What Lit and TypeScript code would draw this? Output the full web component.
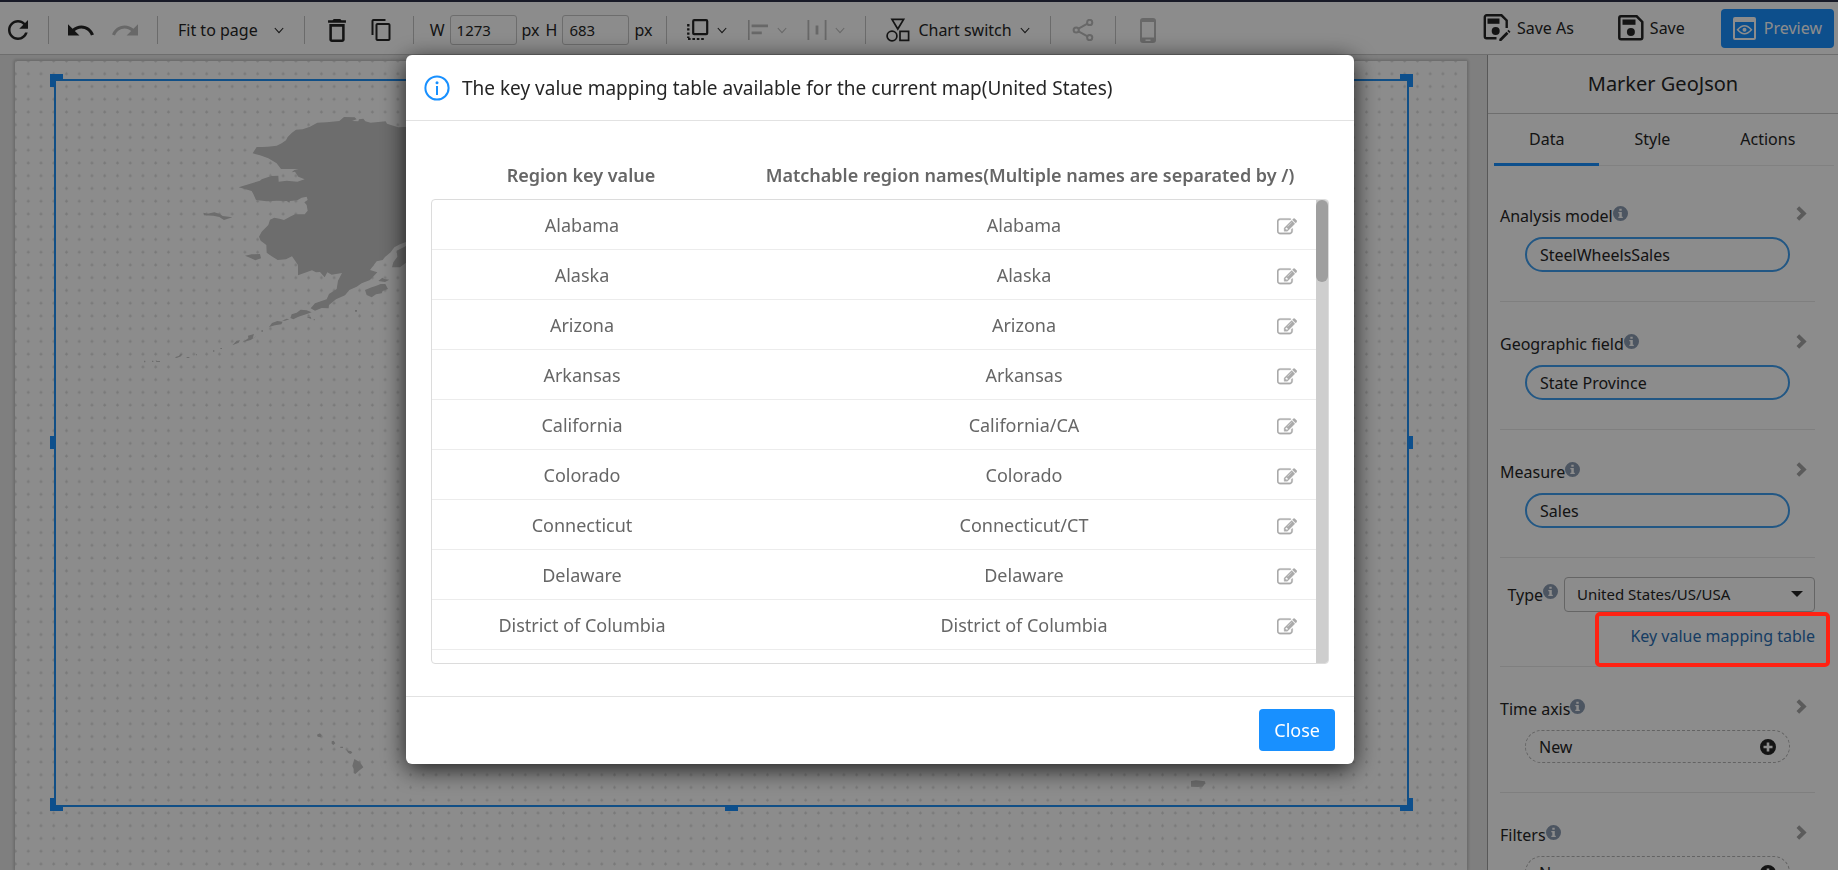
import { LitElement, html, svg, css, nothing, TemplateResult } from "lit";
import { customElement, property, state } from "lit/decorators.js";

type Glyph = { w: number; h: number; box: string; art: TemplateResult };

const GLYPHS: Record<string, Glyph> = {
  refresh: { w: 20, h: 20, box: "4 4 16 16", art: svg`<path d="M17.65 6.35C16.2 4.9 14.21 4 12 4c-4.42 0-7.99 3.58-7.99 8s3.57 8 7.99 8c3.73 0 6.84-2.55 7.73-6h-2.08c-.82 2.33-3.04 4-5.65 4-3.31 0-6-2.69-6-6s2.69-6 6-6c1.66 0 3.14.69 4.22 1.78L13 11h7V4l-2.35 2.35z"/>` },
  undo: { w: 26, h: 12, box: "2 7 20.5 9.2", art: svg`<path d="M12.5 8c-2.65 0-5.05.99-6.9 2.6L2 7v9h9l-3.62-3.62c1.39-1.16 3.16-1.88 5.12-1.88 3.54 0 6.55 2.31 7.6 5.5l2.37-.78C21.08 11.03 17.15 8 12.5 8z"/>` },
  redo: { w: 26, h: 12, box: "1.5 7 20.5 9.2", art: svg`<path d="M18.4 10.6C16.55 8.99 14.15 8 11.5 8c-4.65 0-8.58 3.03-9.96 7.22L3.9 16c1.05-3.19 4.05-5.5 7.6-5.5 1.95 0 3.73.72 5.12 1.88L13 16h9V7l-3.6 3.6z"/>` },
  trash: { w: 18, h: 23, box: "5 3 14 18", art: svg`<path d="M6 19c0 1.1.9 2 2 2h8c1.1 0 2-.9 2-2V7H6v12zM8 9h8v10H8V9zm7.5-5l-1-1h-5l-1 1H5v2h14V4z"/>` },
  copy: { w: 20, h: 22, box: "2 1 19 22", art: svg`<path d="M16 1H4c-1.1 0-2 .9-2 2v14h2V3h12V1zm3 4H8c-1.1 0-2 .9-2 2v14c0 1.1.9 2 2 2h11c1.1 0 2-.9 2-2V7c0-1.1-.9-2-2-2zm0 16H8V7h11v14z"/>` },
  caret: { w: 10, h: 7, box: "0 0 10 7", art: svg`<path d="M.8 1L5 5.6 9.2 1" fill="none" stroke="currentColor" stroke-width="1.1"/>` },
  layer: { w: 22, h: 22, box: "0 0 22 22", art: svg`<rect x="6.2" y="1.2" width="14" height="14" rx="1" fill="none" stroke="currentColor" stroke-width="2.2"/><path d="M1.3 5v14" stroke="currentColor" stroke-width="2.4" stroke-dasharray="2.4 1.8"/><path d="M1 20h17" stroke="currentColor" stroke-width="2.2" stroke-dasharray="2.6 1.8"/>` },
  align: { w: 22, h: 20, box: "0 0 22 20", art: svg`<path d="M1 0h1.6v20H1zM4.600 4.600h16.400v2.600H4.600zM4.600 11.600h10.200v2.600H4.600z"/>` },
  spread: { w: 20, h: 20, box: "0 0 20 20", art: svg`<path d="M.5 0h1.800v20H.5zM17.700 0h1.800v20h-1.800zM8.600 5.600h2.800v9H8.600z"/>` },
  shapes: { w: 24, h: 24, box: "0 0 24 24", art: svg`<g fill="none" stroke="currentColor" stroke-width="1.7"><path d="M6 1.400h11.600L11.800 11z"/><circle cx="6" cy="18" r="4.900"/><path d="M14 13.300h8.600v9H14z"/></g>` },
  share: { w: 22, h: 22, box: "0 0 22 22", art: svg`<g fill="none" stroke="currentColor" stroke-width="2"><circle cx="4.200" cy="11" r="2.600"/><circle cx="17.700" cy="3.400" r="2.600"/><circle cx="17.700" cy="18.600" r="2.600"/><path d="M6.500 9.700l9-5M6.500 12.300l9 5"/></g>` },
  phone: { w: 16, h: 25, box: "0 0 16 25", art: svg`<path fill-rule="evenodd" d="M3 0h10a3 3 0 0 1 3 3v19a3 3 0 0 1-3 3H3a3 3 0 0 1-3-3V3a3 3 0 0 1 3-3zM2 4v15.500h12V4zM5.500 21.500v1.400h5v-1.400z"/>` },
  saveAs: { w: 28, h: 28, box: "0 0 28 28", art: svg`<path d="M13.500 24.300H3.600a1.800 1.800 0 0 1-1.800-1.800V3.100a1.800 1.800 0 0 1 1.800-1.800h14.900l5.200 5.200v7.500" fill="none" stroke="currentColor" stroke-width="2.400"/><path d="M4.500 4.500h12v5.300h-12z"/><circle cx="12.700" cy="17" r="4"/><path d="M16.300 25l7.200-7.200 2 2-7.200 7.200h-2zM24.300 17l1.200-1.200 2 2-1.200 1.200z"/>` },
  save: { w: 26, h: 26, box: "0 0 26 26", art: svg`<path d="M3 1.300h15.700l5.600 5.600V22.500a1.800 1.800 0 0 1-1.800 1.800H3.100a1.800 1.800 0 0 1-1.800-1.800V3.100A1.800 1.800 0 0 1 3 1.300z" fill="none" stroke="currentColor" stroke-width="2.500"/><path d="M4.500 4.500h13v5.300h-13z"/><circle cx="12.900" cy="17" r="4"/>` },
  preview: { w: 23, h: 23, box: "0 0 23 23", art: svg`<path fill-rule="evenodd" d="M2 0h19a2 2 0 0 1 2 2v19a2 2 0 0 1-2 2H2a2 2 0 0 1-2-2V2a2 2 0 0 1 2-2zM2 5v16h19V5z"/><path d="M4.600 12.800Q11.500 4.800 18.400 12.800Q11.500 20.800 4.600 12.800z" fill="none" stroke="currentColor" stroke-width="1.600"/><circle cx="11.500" cy="12.800" r="2"/>` },
  note: { w: 15, h: 15, box: "0 0 15 15", art: svg`<path fill-rule="evenodd" d="M7.500 0a7.500 7.500 0 1 1 0 15a7.500 7.500 0 0 1 0-15zM6.300 2.700v2h2.400v-2zM5.300 5.900v1.300h1v3.500h-1V12h4.500v-1.300h-1V5.900z"/>` },
  chevron: { w: 11, h: 15, box: "0 0 11 15", art: svg`<path d="M3.200 .3L10.600 7.500 3.200 14.700.5 12 5 7.500.5 3z"/>` },
  plus: { w: 16, h: 16, box: "0 0 16 16", art: svg`<path fill-rule="evenodd" d="M8 0a8 8 0 1 1 0 16A8 8 0 0 1 8 0zM6.700 3.500v3.200H3.500v2.600h3.200v3.200h2.600V9.300h3.200V6.700H9.300V3.500z"/>` },
  info: { w: 26, h: 26, box: "0 0 26 26", art: svg`<circle cx="13" cy="13" r="11.600" fill="none" stroke="currentColor" stroke-width="2"/><circle cx="13" cy="7.800" r="1.500"/><path d="M12 11h2v9h-2z"/>` },
  edit: { w: 20, h: 20, box: "0 0 1792 1792", art: svg`<path stroke="currentColor" stroke-width="30" d="M888 1184l116-116-152-152-116 116v56h96v96h56zm440-720q-16-16-33 1l-350 350q-17 17-1 33t33-1l350-350q17-17 1-33zm80 594v190q0 119-84.500 203.500t-203.500 84.500h-832q-119 0-203.500-84.500t-84.500-203.500v-832q0-119 84.500-203.500t203.500-84.500h832q63 0 117 25 15 7 18 23 3 17-9 29l-49 49q-14 14-32 8-23-6-45-6h-832q-66 0-113 47t-47 113v832q0 66 47 113t113 47h832q66 0 113-47t47-113v-126q0-13 9-22l64-64q15-15 35-7t20 29zm-96-738l288 288-672 672h-288v-288zm444 132l-92 92-288-288 92-92q28-28 68-28t68 28l152 152q28 28 28 68t-28 68z"/>` },
};

const icon = (name: string) => {
  const g = GLYPHS[name];
  return html`<svg class="icon" width=${g.w} height=${g.h} viewBox=${g.box} fill="currentColor" aria-hidden="true">${g.art}</svg>`;
};

const shared = css`
  * { box-sizing: border-box; }
  button, input, select { font: inherit; color: inherit; margin: 0; }
  button { background: none; border: 0; padding: 0; cursor: pointer; }
  .icon { display: block; flex: none; }
`;

@customElement("tool-bar")
class ToolBar extends LitElement {
  static styles = [shared, css`
    :host { display: flex; justify-content: space-between; align-items: center; height: 53px; background: #fff; border-bottom: 1px solid #c8c8c8; color: #262626; }
    .tools, .group, .actions, .item { display: flex; align-items: center; }
    .tools { padding-top: 4px; }
    .group { height: 28px; padding: 0 20px; gap: 20px; border-right: 1px solid #c4c4c4; }
    .group:first-child { padding-left: 8px; }
    .group:last-child { border-right: 0; }
    .group.tight { padding: 0 14px 0 16px; gap: 6px; }
    .item { gap: 8px; white-space: nowrap; }
    .zoom { gap: 16px; }
    .cell { width: 24px; display: flex; justify-content: center; }
    .off { color: #bdbdbd; }
    .size { gap: 5px; }
    .size input { width: 67px; height: 30px; padding: 0 6px; border: 1px solid #c6c6c6; border-radius: 3px; background: transparent; font-size: 15px; }
    .actions { gap: 36px; padding-right: 4px; white-space: nowrap; }
    .saves { display: flex; gap: 44px; }
    .saves .item { gap: 6px; }
    .preview { height: 39px; padding: 0 12px; border-radius: 4px; background: #1890ff; color: #fff; }
  `];

  render() {
    return html`
      <div class="tools">
        <div class="group"><button aria-label="Refresh">${icon("refresh")}</button></div>
        <div class="group">
          <button class="cell" aria-label="Undo">${icon("undo")}</button>
          <button class="cell off" aria-label="Redo">${icon("redo")}</button>
        </div>
        <div class="group"><button class="item zoom">Fit to page ${icon("caret")}</button></div>
        <div class="group">
          <button class="cell" aria-label="Delete">${icon("trash")}</button>
          <button class="cell" aria-label="Copy">${icon("copy")}</button>
        </div>
        <div class="group tight">
          <label class="item size">W <input .value=${"1273"} /> px</label>
          <label class="item size">H <input .value=${"683"} /> px</label>
        </div>
        <div class="group">
          <button class="item" aria-label="Layer">${icon("layer")}${icon("caret")}</button>
          <button class="item off" aria-label="Align">${icon("align")}${icon("caret")}</button>
          <button class="item off" aria-label="Distribute">${icon("spread")}${icon("caret")}</button>
        </div>
        <div class="group"><button class="item">${icon("shapes")}Chart switch${icon("caret")}</button></div>
        <div class="group"><button class="cell off" aria-label="Share">${icon("share")}</button></div>
        <div class="group"><button class="cell off" aria-label="Mobile layout">${icon("phone")}</button></div>
      </div>
      <div class="actions">
        <div class="saves">
          <button class="item">${icon("saveAs")}Save As</button>
          <button class="item">${icon("save")}Save</button>
        </div>
        <button class="item preview">${icon("preview")}Preview</button>
      </div>`;
  }
}

@customElement("map-canvas")
class MapCanvas extends LitElement {
  static styles = [shared, css`
    :host { display: flex; padding: 6px 20px 0 15px; background: #e8e8e8; }
    .paper { position: relative; flex: 1; background: #fff; box-shadow: 0 0 3px 1px rgba(0, 0, 0, 0.22); }
    .fill { position: absolute; inset: 0; width: 100%; height: 100%; }
    .selection { position: absolute; inset: 18px 58px 63px 39px; border: 2px solid #2090f4; }
    .handle { position: absolute; width: 13px; height: 13px; border: 0 solid #1890ff; }
    .n { top: -7px; border-top-width: 5px; }
    .s { bottom: -6px; border-bottom-width: 5px; }
    .w { left: -6px; border-left-width: 5px; }
    .e { right: -6px; border-right-width: 5px; }
    .mid-x { left: calc(50% - 7px); }
    .mid-y { top: calc(50% - 7px); }
  `];

  render() {
    return html`
      <div class="paper">
        <svg class="fill" aria-hidden="true">
          <defs><pattern id="dots" width="12.745" height="12.745" patternUnits="userSpaceOnUse" patternTransform="translate(-2 -2)">
            <path d="M1 2h3M2.500 .5v3" stroke="#dcdcdc" stroke-width="1.200"/>
          </pattern></defs>
          <rect width="100%" height="100%" fill="url(#dots)"/>
        </svg>
        <div class="selection">
          <svg class="fill" fill="#c6c6c6" role="img" aria-label="Map of the United States">
            <g transform="translate(124 9) scale(.33333)">
              <path d="M218 190L230 171Q265 171 290 167L305 160 318 151 323 141 335 129 348 119 368 118 390 110 412 98 440 97 478 93 492 81 524 82 530 88 516 93 535 94 537 88 550 86 556 94 572 98 617 94 621 101 640 107 655 112 690 110 780 130V440L678 456 660 463 643 472 632 487 615 501 608 510 590 514 582 524 570 540 592 547 570 570 545 580 530 590 508 600 495 616 468 628 447 645 446 655 425 654 405 662 392 655 405 640 440 628 447 612 470 597 474 572 486 549 455 554 442 547 434 562 420 546 408 547 396 541 354 556V525L336 499 318 508 293 510 275 499 260 488 259 465 242 452 237 440 245 425 265 405 270 389 283 383 298 386 312 390 330 380 345 373 374 373 383 362 380 345 373 337 383 330 380 320 365 323 352 331 330 333 328 338 320 333 290 332 260 334 228 330 220 312 215 303 176 292 240 272 245 268 274 258 295 257 296 275 320 272 352 275 374 268 355 260 345 245 335 247 343 240 356 237H303L290 220 265 205 240 196z"/>
              <path d="M70 368L83 371 103 367 120 372 128 378 157 382 132 390 118 381 100 377 72 376zM195 497L215 493 240 492 243 505 226 511 210 503zM555 600L575 592 587 588 602 582 616 582 624 597 608 603 605 610 588 613 575 622 560 615zM595 573L607 563 613 567 628 569 615 576zM640 517L652 500 650 482 678 468V518L660 532 636 532zM331 684L335 673 350 668 362 659 380 661 395 667 378 673 362 678 352 682 340 688zM267 711L276 699 292 693 308 695 304 703 285 706zM157 766L170 752 180 751 176 758zM187 757L205 745 204 737 222 732 218 745 230 738 212 750zM306 692L320 686 328 688 315 692zM380 682L392 680 394 687zM525 660h6v5h-6zM-16 802L-4 798 2 792 6 793 3 799-10 804zM99 781h4v4h-4zM121 774h5v3h-5zM20 801h8v3h-8zM48 793h3v3h-3zM244 721h5v4h-5zM399 690l6-3v4zM-108 812h4v5h-4zM-84 812h4v4h-4zM-73 810l4 3 9 0v3h-11z"/>
            </g>
            <g transform="translate(-56 619) scale(.33333)">
              <path d="M951 104L960 100 965 106 962 112 953 110zM995 124L1001 122 1006 130 1000 135 995 131zM1021 140h8v4h-8zM1038 148L1046 152 1053 153 1057 158 1051 162 1044 158zM1063 177L1080 187 1090 202 1075 214 1066 222 1061 219 1061 207 1057 198z"/>
            </g>
            <g transform="translate(904 519) scale(.33333)"><path d="M693 543L708 541 735 544 736 550 728 560 712 561 693 560z"/></g>
          </svg>
          <i class="handle n w"></i><i class="handle n e"></i><i class="handle s w"></i><i class="handle s e"></i>
          <i class="handle n mid-x"></i><i class="handle s mid-x"></i><i class="handle w mid-y"></i><i class="handle e mid-y"></i>
        </div>
      </div>`;
  }
}

@customElement("property-panel")
class PropertyPanel extends LitElement {
  @state() tab = "Data";

  static styles = [shared, css`
    :host { display: flex; flex-direction: column; width: 351px; flex: none; background: #fff; border-left: 1px solid #a0a0a0; color: #262626; }
    h2 { margin: 0; height: 59px; flex: none; display: grid; place-items: center; font-size: 20px; font-weight: 400; border-bottom: 1px solid #c8c8c8; }
    .tabs { display: flex; margin: 0 4px 8px 6px; height: 52px; flex: none; border-bottom: 1px solid #ececec; }
    .tabs button { padding: 0 35px; margin-bottom: -1px; border-bottom: 3px solid transparent; }
    .tabs .on { border-bottom-color: #1890ff; }
    section { margin: 0 23px 0 12px; padding: 30px 0 29px; flex: none; border-bottom: 1px solid #e8e8e8; }
    .head { display: flex; align-items: center; height: 24px; margin-bottom: 9px; }
    .head .icon, .type label .icon { margin-bottom: 6px; color: #8b9bb1; }
    .head button { margin: 0 8px 0 auto; }
    .head button .icon { color: #a6a6a6; }
    .pill { display: flex; align-items: center; justify-content: space-between; width: auto; margin: 0 25px; height: 35px; padding: 0 13px; border: 2px solid #3f9ff0; border-radius: 18px; }
    .pill.empty { height: 33px; border: 1px dashed #b4b4b4; }
    .wide { width: calc(100% - 50px); }
    .type { padding: 19px 0 18px; }
    .row { display: flex; align-items: center; justify-content: flex-end; gap: 6px; margin-bottom: 12px; }
    .row label { display: flex; align-items: center; }
    .pick { position: relative; flex: none; width: 251px; }
    select { appearance: none; width: 100%; height: 35px; padding: 0 12px 2px; border: 1px solid #b8b8b8; border-radius: 4px; background: transparent; font-size: 15px; }
    .pick::after { content: ""; position: absolute; right: 12px; top: 14px; border: 6px solid transparent; border-top-color: #262626; border-bottom: 0; pointer-events: none; }
    .link { position: relative; display: block; width: fit-content; margin-left: auto; line-height: 24px; color: #2a6fb5; text-decoration: none; }
    .link::after { content: ""; position: absolute; inset: -12px -15px -19px -35px; z-index: 20; border: 4px solid #ff2213; border-radius: 5px; pointer-events: none; }
  `];

  field(label: string, value?: string) {
    return html`<section>
      <div class="head"><span>${label}</span>${icon("note")}<button aria-label="Expand ${label}">${icon("chevron")}</button></div>
      ${value ? html`<div class="pill">${value}</div>` : html`<button class="pill empty wide">New ${icon("plus")}</button>`}
    </section>`;
  }

  render() {
    return html`
      <h2>Marker GeoJson</h2>
      <div class="tabs" role="tablist">
        ${["Data", "Style", "Actions"].map((t) => html`<button role="tab" aria-selected=${t === this.tab} class=${t === this.tab ? "on" : ""} @click=${() => (this.tab = t)}>${t}</button>`)}
      </div>
      ${this.field("Analysis model", "SteelWheelsSales")}
      ${this.field("Geographic field", "State Province")}
      ${this.field("Measure", "Sales")}
      <section class="type">
        <div class="row">
          <label for="map">Type${icon("note")}</label>
          <div class="pick"><select id="map"><option>United States/US/USA</option></select></div>
        </div>
        <a class="link" href="#mapping">Key value mapping table</a>
      </section>
      ${this.field("Time axis")}
      ${this.field("Filters")}`;
  }
}

@customElement("mapping-dialog")
class MappingDialog extends LitElement {
  @property({ type: Array }) rows: [string, string][] = [];

  static styles = [shared, css`
    :host { display: block; width: 948px; max-width: 100%; background: #fff; border-radius: 6px; box-shadow: 0 5px 24px rgba(0, 0, 0, 0.8); color: #666; font-size: 18px; }
    header { display: flex; align-items: center; gap: 12px; height: 66px; padding: 0 18px; border-bottom: 1px solid #e2e2e2; color: #1890ff; }
    h1 { margin: 0; font-size: 19px; font-weight: 400; color: #262626; }
    .body { position: relative; padding: 30px 25px 32px; }
    table, thead, tbody { display: block; }
    tr { display: grid; grid-template-columns: 300px 1fr; align-items: center; }
    thead tr { height: 48px; }
    th, td { padding: 0; text-align: center; }
    th { font-weight: 600; }
    tbody { height: 465px; border: 1px solid #dcdcdc; border-radius: 4px; overflow-y: auto; scrollbar-width: none; }
    tbody tr { height: 50px; margin-right: 12px; border-bottom: 1px solid #ececec; }
    .names { position: relative; }
    .names button { position: absolute; right: 19px; top: 4px; color: #aaa; }
    .track { position: absolute; top: 79px; right: 26px; bottom: 33px; width: 12px; background: #cecece; border-radius: 0 3px 3px 0; }
    .thumb { height: 82px; border-radius: 6px; background: #9f9f9f; }
    footer { display: flex; justify-content: flex-end; padding: 12px 19px 13px; border-top: 1px solid #e2e2e2; }
    footer button { height: 42px; padding: 0 15px; border-radius: 4px; background: #1890ff; color: #fff; }
  `];

  render() {
    return html`
      <header>${icon("info")}<h1>The key value mapping table available for the current map(United States)</h1></header>
      <div class="body">
        <table>
          <thead><tr><th>Region key value</th><th>Matchable region names(Multiple names are separated by /)</th></tr></thead>
          <tbody>
            ${this.rows.map(([key, names]) => html`<tr><td>${key}</td><td class="names">${names}<button aria-label="Edit ${key}">${icon("edit")}</button></td></tr>`)}
          </tbody>
        </table>
        <div class="track"><div class="thumb"></div></div>
      </div>
      <footer><button @click=${() => this.dispatchEvent(new CustomEvent("close"))}>Close</button></footer>`;
  }
}

@customElement("app-root")
class AppRoot extends LitElement {
  @state() open = true;

  rows: [string, string][] = [
    ["Alabama", "Alabama"],
    ["Alaska", "Alaska"],
    ["Arizona", "Arizona"],
    ["Arkansas", "Arkansas"],
    ["California", "California/CA"],
    ["Colorado", "Colorado"],
    ["Connecticut", "Connecticut/CT"],
    ["Delaware", "Delaware"],
    ["District of Columbia", "District of Columbia"],
    ["", ""],
  ];

  static styles = [shared, css`
    :host { display: flex; flex-direction: column; height: 100vh; overflow: hidden; border-top: 2px solid #2c3048; box-sizing: border-box; font: 16px/24px "Noto Sans", "Open Sans", sans-serif; }
    tool-bar { flex: none; }
    main { display: flex; flex: 1; min-height: 0; }
    map-canvas { flex: 1; min-width: 0; }
    property-panel { overflow: hidden; }
    .mask { position: fixed; inset: 0; z-index: 10; display: flex; justify-content: center; align-items: flex-start; padding: 55px 78px 0 0; background: rgba(0, 0, 0, 0.45); }
  `];

  render() {
    return html`
      <tool-bar></tool-bar>
      <main><map-canvas></map-canvas><property-panel></property-panel></main>
      ${this.open ? html`<div class="mask" role="dialog" aria-modal="true"><mapping-dialog .rows=${this.rows} @close=${() => (this.open = false)}></mapping-dialog></div>` : nothing}`;
  }
}
